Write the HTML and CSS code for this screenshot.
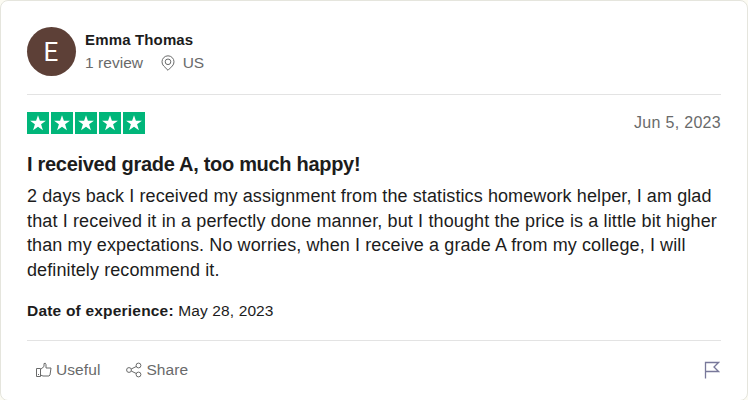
FILE: index.html
```html
<!DOCTYPE html>
<html lang="en"><head><meta charset="utf-8"><title>Review</title><link rel="stylesheet" href="styles.css"></head>
<body>
<article class="card">
<header class="user">
<div class="avatar">E</div>
<div><div class="name">Emma Thomas</div>
<div class="meta"><span class="count">1 review</span><svg class="pin" viewBox="0 0 16 16"><path d="M8 15.300 3.700 11a6 6 0 1 1 8.600 0Z"/><circle cx="8" cy="6.800" r="2.800"/></svg><span>US</span></div></div>
</header>
<section class="body">
<div class="rating">
<svg class="stars" viewBox="0 0 118 22"><defs><g id="s"><rect width="22" height="22" fill="#00b67a"/><path fill="#fff" d="M11 3.200 12.900 8.800H18.900L14.100 12.300 15.900 18.200 11 14.700 6.100 18.200 7.900 12.300 3.100 8.800H9.100Z"/></g></defs><use href="#s"/><use href="#s" x="24"/><use href="#s" x="48"/><use href="#s" x="72"/><use href="#s" x="96"/></svg>
<time class="date">Jun 5, 2023</time>
</div>
<h2 class="title">I received grade A, too much happy!</h2>
<p class="text">2 days back I received my assignment from the statistics homework helper, I am glad<br><span class="wide">that I received it in a perfectly done manner, but I thought the price is a little bit higher</span><br>than my expectations. No worries, when I receive a grade A from my college, I will<br>definitely recommend it.</p>
<p class="exp"><b>Date of experience:</b> <span>May 28, 2023</span></p>
</section>
<footer class="actions">
<span class="action useful"><svg viewBox="0 0 16 16"><path d="M.5 6.500h4v8h-4zM4.500 7.500 8 4.500v-3q1.800-1 2 1.200v3.300h5l-1 7-1 1H7l-2.500-1M2 12.500h1"/></svg>Useful</span>
<span class="action share"><svg viewBox="0 0 16 16"><circle cx="3" cy="8" r="2.400"/><circle cx="12.500" cy="3.500" r="2.400"/><circle cx="12.500" cy="12.500" r="2.400"/><path d="m5.200 7 5.100-2.500M5.200 9l5.100 2.500"/></svg>Share</span>
<svg class="flag" viewBox="0 0 16 18"><path d="M1.500 17.500V1.500h13l-4.500 4.500 4.500 4.500h-13"/></svg>
</footer>
</article>
</body></html>
```
FILE: styles.css
```css
*{box-sizing:border-box}
body{margin:0;height:400px;overflow:hidden;background:#fcfbf3;font-family:"Liberation Sans",Arial,sans-serif;color:#1c1c1c}
.card{height:401px;background:#fff;border:1px solid #e5e5dd;border-radius:8px;padding:26px 26px 0}
.user{display:flex;gap:9px;height:68px;border-bottom:1px solid #e3e3e3}
.avatar{width:49px;height:49px;border-radius:50%;background:#5d4037;color:#fff;font:26px/50px Roboto,sans-serif;text-align:center;text-indent:-1px}
.name{font-size:15px;font-weight:700;line-height:18px;margin-top:4px;letter-spacing:.15px}
.meta{display:flex;align-items:center;font-size:15.500px;line-height:18px;color:#696a6a;margin-top:5px;letter-spacing:.05px}
svg{fill:none;stroke:#696a6a}
.pin{width:16px;height:16px;margin:0 7px 0 16.500px}
.rating{display:flex;justify-content:space-between;align-items:center;margin-top:17px;height:22px}
.stars{width:118px;height:22px;stroke:none;margin-left:.4px}
.date{font-size:16px;line-height:18px;color:#696a6a;letter-spacing:.3px}
.title{font-size:20px;line-height:28px;font-weight:700;margin:16px 0 0;letter-spacing:-.3px}
.text{font-size:18px;line-height:24.700px;margin:6px 0 0;white-space:nowrap;letter-spacing:.1px}
.wide{letter-spacing:.135px}
.exp{font-size:15.500px;line-height:20px;margin:18px 0 0;letter-spacing:.12px}
.exp b{font-weight:700;letter-spacing:.2px}
.actions{display:flex;align-items:center;height:59px;margin-top:19px;border-top:1px solid #e3e3e3}
.action{display:flex;align-items:center;font-size:15.500px;color:#696a6a;gap:4px;letter-spacing:.08px}
.action svg{width:16px;height:16px}
.useful{margin-left:9px}.share{margin-left:26px}
.flag{width:16px;height:18px;margin-left:auto;margin-right:1px;stroke:#78789a;stroke-width:1.300}
```
